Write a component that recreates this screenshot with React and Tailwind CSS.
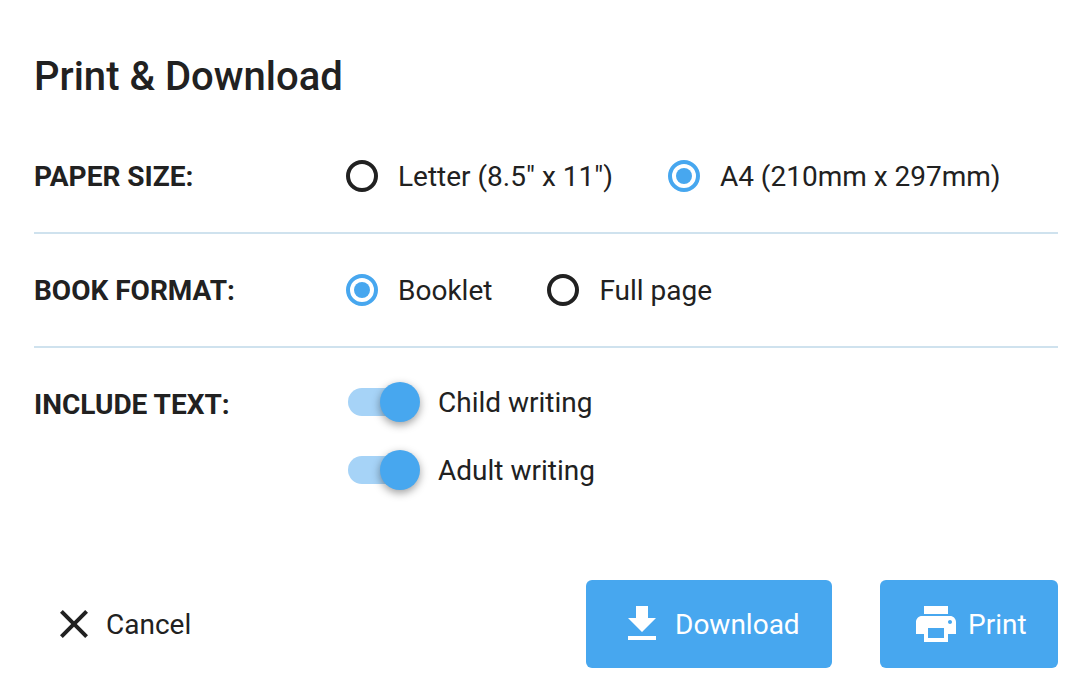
const font = { fontFamily: "Roboto, sans-serif" }

function Radio({ checked, label }) {
  return (
    <label className="flex items-center gap-5">
      <span
        className={
          checked
            ? "flex h-8 w-8 items-center justify-center rounded-full border-4 border-[#47a7ef]"
            : "flex h-8 w-8 items-center justify-center rounded-full border-4 border-[#212121]"
        }
      >
        {checked && <span className="h-4 w-4 rounded-full bg-[#47a7ef]" />}
      </span>
      <span className="pt-0.5 text-[28px] leading-8 text-[#212121]">{label}</span>
    </label>
  )
}

function Toggle({ label }) {
  return (
    <div className="flex h-[68px] items-center">
      <div className="relative ml-0.5 h-7 w-[52px] rounded-full bg-[#a6d3f7]">
        <span className="absolute -right-5 -top-1.5 h-10 w-10 rounded-full bg-[#47a7ef] shadow-[0_3px_8px_rgba(0,0,0,0.38)]" />
      </div>
      <span className="ml-[38px] pt-0.5 text-[28px] leading-8 text-[#212121]">{label}</span>
    </div>
  )
}

function Row({ label, children }) {
  return (
    <div className="flex h-[114px] items-center border-b-2 border-[#cfe2ee]">
      <div className="w-[312px] pt-0.5 text-[28px] font-bold leading-8 text-[#212121]">{label}</div>
      {children}
    </div>
  )
}

export default function App() {
  return (
    <div className="h-[692px] w-[1090px] bg-white pl-[34px] pr-8 pt-[53px]" style={font}>
      <h1 className="h-[48px] text-[40px] font-medium leading-[48px] text-[#212121]">Print &amp; Download</h1>

      <div className="mt-[19px]">
        <Row label="PAPER SIZE:">
          <div className="flex items-center gap-[55px]">
            <Radio label={'Letter (8.5" x 11")'} />
            <Radio checked label="A4 (210mm x 297mm)" />
          </div>
        </Row>
        <Row label="BOOK FORMAT:">
          <div className="flex items-center gap-[55px]">
            <Radio checked label="Booklet" />
            <Radio label="Full page" />
          </div>
        </Row>
        <div className="flex pt-5">
          <div className="w-[312px] pt-[21px] text-[28px] font-bold leading-8 text-[#212121]">INCLUDE TEXT:</div>
          <div>
            <Toggle label="Child writing" />
            <Toggle label="Adult writing" />
          </div>
        </div>
      </div>

      <div className="mt-[76px] flex items-center">
        <button className="ml-4 flex items-center text-[28px] text-[#212121]">
          <svg viewBox="0 0 24 24" className="h-12 w-12 fill-current">
            <path d="M19 6.41L17.59 5 12 10.59 6.41 5 5 6.41 10.59 12 5 17.59 6.41 19 12 13.41 17.59 19 19 17.59 13.41 12z" />
          </svg>
          <span className="ml-2 pt-0.5">Cancel</span>
        </button>
        <button className="ml-auto flex h-[88px] w-[246px] items-center rounded-md bg-[#47a7ef] pl-8 text-[28px] text-white">
          <svg viewBox="0 0 24 24" className="h-12 w-12 fill-current">
            <path d="M19 9h-4V3H9v6H5l7 7 7-7zM5 18v2h14v-2H5z" />
          </svg>
          <span className="ml-[9px] pt-0.5">Download</span>
        </button>
        <button className="ml-12 flex h-[88px] w-[178px] items-center rounded-md bg-[#47a7ef] pl-8 text-[28px] text-white">
          <svg viewBox="0 0 24 24" className="h-12 w-12 fill-current">
            <path d="M19 8H5c-1.66 0-3 1.34-3 3v6h4v4h12v-4h4v-6c0-1.66-1.34-3-3-3zm-3 11H8v-5h8v5zm3-7c-.55 0-1-.45-1-1s.45-1 1-1 1 .45 1 1-.45 1-1 1zm-1-9H6v4h12V3z" />
          </svg>
          <span className="ml-2 pt-0.5">Print</span>
        </button>
      </div>
    </div>
  )
}
